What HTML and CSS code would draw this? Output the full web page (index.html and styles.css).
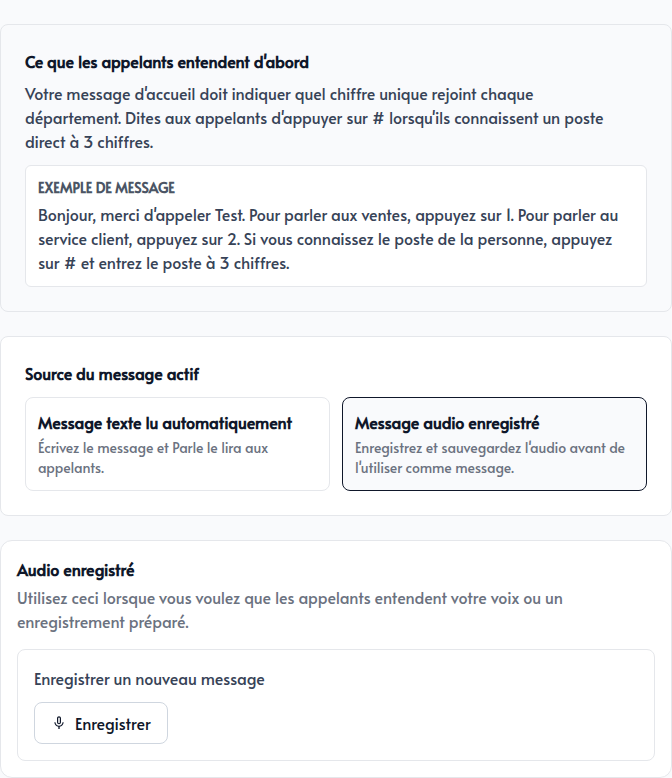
FILE: index.html
```html
<!DOCTYPE html>
<html lang="fr">
<head>
<meta charset="utf-8">
<meta name="viewport" content="width=device-width, initial-scale=1">
<title>Message d'accueil</title>
<link rel="stylesheet" href="styles.css">
</head>
<body>
<main class="page">
  <section class="card card-tinted">
    <h2 class="title">Ce que les appelants entendent d'abord</h2>
    <p class="text intro">Votre message d'accueil doit indiquer quel chiffre unique rejoint chaque département. Dites aux appelants d'appuyer sur # lorsqu'ils connaissent un poste direct à 3 chiffres.</p>
    <div class="example">
      <h3 class="label">Exemple de message</h3>
      <p class="text">Bonjour, merci d'appeler Test. Pour parler aux ventes, appuyez sur 1. Pour parler au service client, appuyez sur 2. Si vous connaissez le poste de la personne, appuyez sur # et entrez le poste à 3 chiffres.</p>
    </div>
  </section>

  <section class="card">
    <h2 class="title">Source du message actif</h2>
    <div class="options">
      <button class="option" type="button" aria-pressed="false">
        <span class="title">Message texte lu automatiquement</span>
        <span class="hint">Écrivez le message et Parle le lira aux appelants.</span>
      </button>
      <button class="option" type="button" aria-pressed="true">
        <span class="title">Message audio enregistré</span>
        <span class="hint">Enregistrez et sauvegardez l'audio avant de l'utiliser comme message.</span>
      </button>
    </div>
  </section>

  <section class="card card-audio">
    <h2 class="title">Audio enregistré</h2>
    <p class="text muted">Utilisez ceci lorsque vous voulez que les appelants entendent votre voix ou un enregistrement préparé.</p>
    <div class="recorder">
      <p class="text">Enregistrer un nouveau message</p>
      <button class="record" type="button">
        <svg class="icon" viewBox="0 0 24 24" aria-hidden="true"><path d="M12 14c1.66 0 2.99-1.34 2.99-3L15 5c0-1.66-1.34-3-3-3S9 3.34 9 5v6c0 1.66 1.34 3 3 3zm-1.2-9.1c0-.66.54-1.2 1.2-1.2.66 0 1.2.54 1.2 1.2l-.01 6.2c0 .66-.53 1.2-1.19 1.2-.66 0-1.2-.54-1.2-1.2V4.9zm6.5 6.1c0 3-2.54 5.1-5.3 5.1S6.7 14 6.7 11H5c0 3.41 2.72 6.23 6 6.72V21h2v-3.28c3.28-.48 6-3.3 6-6.72h-1.7z"/></svg>
        Enregistrer
      </button>
    </div>
  </section>
</main>
</body>
</html>
```
FILE: styles.css
```css
* {
  box-sizing: border-box;
}

body {
  margin: 0;
  background: #f9fafc;
  color: #374357;
  font-family: Alata, Lato, "Liberation Sans", sans-serif;
  font-size: 16px;
  line-height: 24px;
}

h2,
h3,
p {
  margin: 0;
}

button {
  font: inherit;
  cursor: pointer;
}

.page {
  display: flex;
  flex-direction: column;
  gap: 24px;
  padding-top: 24px;
}

.card {
  padding: 24px;
  border: 1px solid #e5e7eb;
  border-radius: 8px;
  background: #fff;
}

.card-tinted {
  background: #f9fafc;
}

.card-audio {
  padding: 16px;
  border-radius: 12px;
}

.title {
  color: #0f172a;
  font-size: 16px;
  font-weight: 700;
}

.intro {
  max-width: 600px;
  margin-top: 8px;
}

.example {
  margin-top: 12px;
  padding: 12px;
  border: 1px solid #e5e7eb;
  border-radius: 6px;
  background: #fff;
}

.label {
  margin-bottom: 4px;
  color: #4b5565;
  font-size: 14px;
  font-weight: 700;
  line-height: 20px;
  text-transform: uppercase;
}

.options {
  display: grid;
  grid-template-columns: 1fr 1fr;
  gap: 12px;
  margin-top: 12px;
}

.option {
  display: flex;
  flex-direction: column;
  gap: 4px;
  padding: 12px;
  border: 1px solid #e5e7eb;
  border-radius: 8px;
  background: #fff;
  text-align: left;
}

.option[aria-pressed="true"] {
  border-color: #0f172a;
  background: #f9fafc;
}

.hint {
  color: #6b7280;
  font-size: 14px;
  line-height: 20px;
}

.muted {
  margin-top: 4px;
  color: #6b7280;
}

.recorder {
  display: flex;
  flex-direction: column;
  align-items: flex-start;
  gap: 12px;
  margin-top: 16px;
  padding: 16px;
  border: 1px solid #e5e7eb;
  border-radius: 8px;
}

.record {
  display: flex;
  align-items: center;
  gap: 8px;
  padding: 8px 16px;
  border: 1px solid #cfd6df;
  border-radius: 8px;
  background: #fff;
  color: #0f172a;
}

.icon {
  width: 16px;
  height: 16px;
  fill: currentColor;
}
```
